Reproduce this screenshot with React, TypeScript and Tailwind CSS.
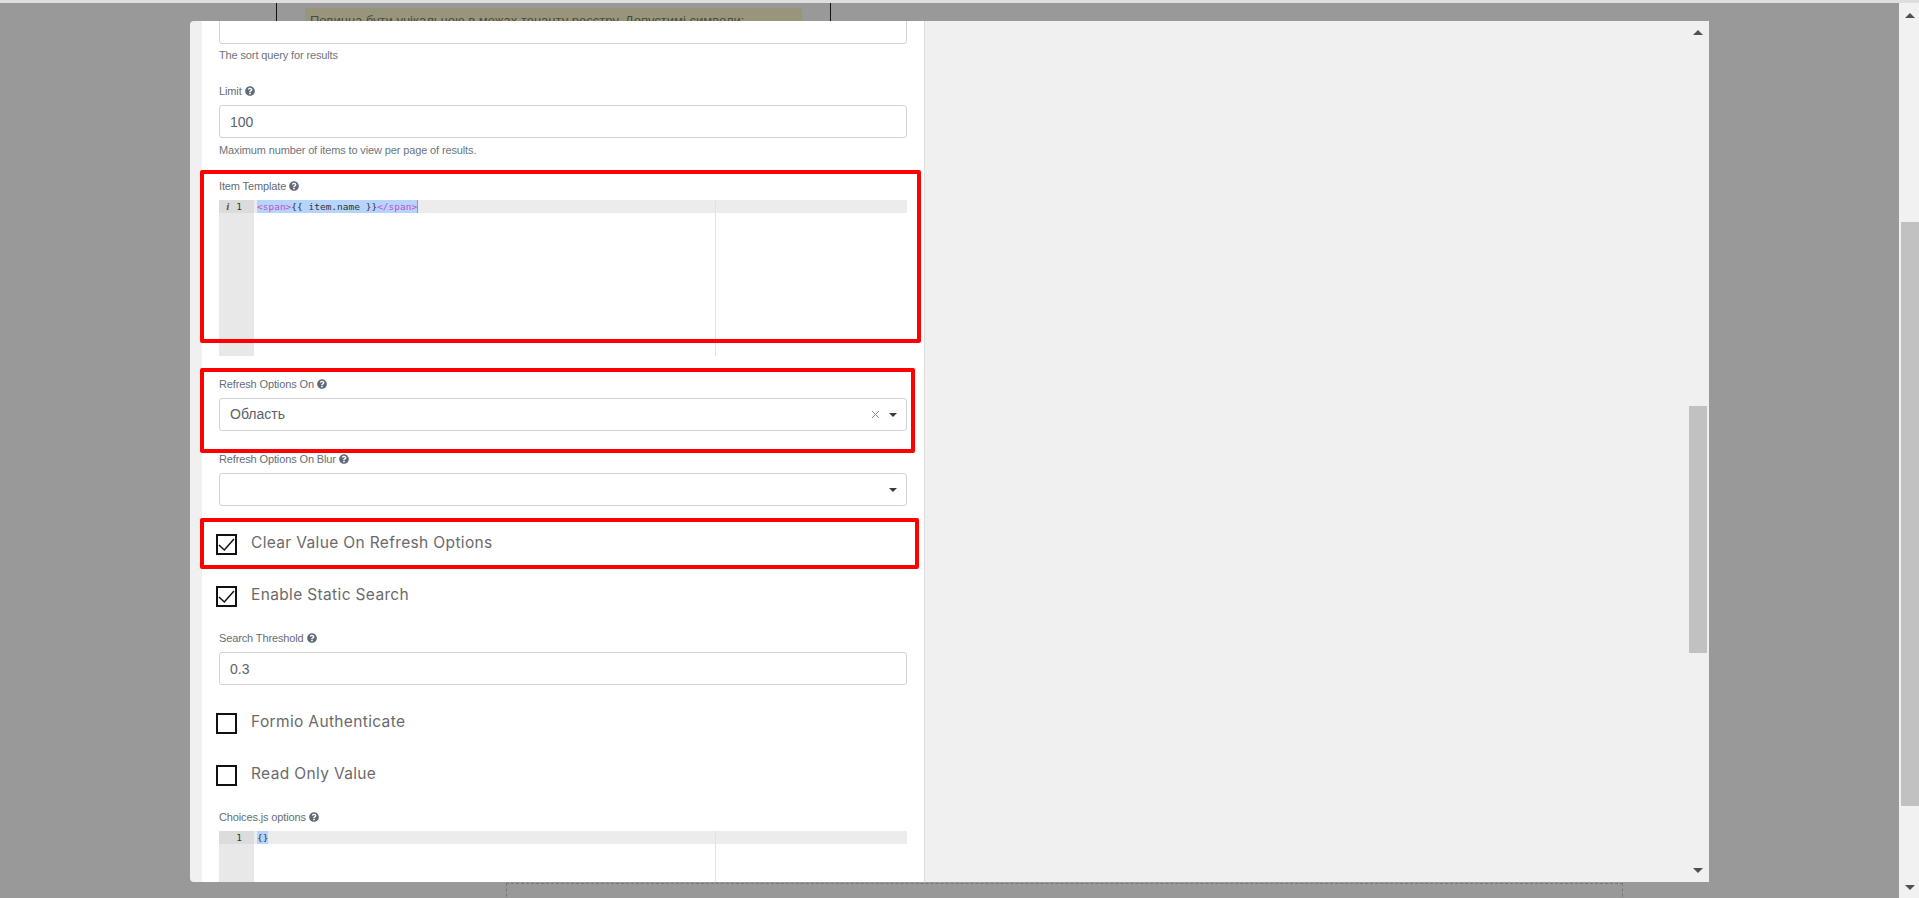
import type { ReactNode } from 'react';
import { FaQuestionCircle } from 'react-icons/fa';

function Label({ text, className = '' }: { text: string; className?: string }) {
  return (
    <div className={`flex h-[14px] items-center gap-[3px] text-[11px] leading-[14px] tracking-[-0.13px] text-[#666d75] ${className}`}>
      <span>{text}</span>
      <FaQuestionCircle size={10} className="text-[#5f6b78]" />
    </div>
  );
}

function HelpText({ text, className = '' }: { text: string; className?: string }) {
  return <p className={`h-[14px] text-[11px] leading-[14px] tracking-[-0.13px] text-[#6c757d] ${className}`}>{text}</p>;
}

function Caret() {
  return <span className="h-0 w-0 border-x-[4px] border-t-[4px] border-x-transparent border-t-[#3a3a3a]" />;
}

function Field({ value, className = '' }: { value?: string; className?: string }) {
  return (
    <div className={`flex h-[33px] items-center rounded-[3px] border border-[#ced4da] bg-white px-[10px] pt-px text-[14px] text-[#5c6268] ${className}`}>
      {value}
    </div>
  );
}

function Select({ value, clear, className = '' }: { value?: string; clear?: boolean; className?: string }) {
  return (
    <div className={`flex h-[33px] items-center rounded-[3px] border border-[#ced4da] bg-white pl-[10px] pr-[9px] text-[14px] text-[#5c6268] ${className}`}>
      <span className="flex-1">{value}</span>
      {clear && (
        <svg width="7" height="7" viewBox="0 0 7 7" stroke="#8a8a8a" strokeWidth="1" className="mr-[10px]">
          <path d="M0 0 L7 7 M7 0 L0 7" />
        </svg>
      )}
      <Caret />
    </div>
  );
}

function Check({ label, checked, className = '' }: { label: string; checked?: boolean; className?: string }) {
  return (
    <div className={`-ml-[3px] flex h-[21px] items-center gap-[14px] ${className}`}>
      <span className="flex h-[21px] w-[21px] shrink-0 items-center justify-center border-2 border-[#111] bg-white">
        {checked && (
          <svg width="17" height="17" viewBox="0 0 17 17" fill="none" stroke="#111" strokeWidth="1.5">
            <path d="M1 9 L6.3 14 L16 3" />
          </svg>
        )}
      </span>
      <span className="-mt-[3px] font-['Inter',sans-serif] text-[15.5px] tracking-[0.35px] text-[#6a6a6a]">{label}</span>
    </div>
  );
}

function CodeEditor({ height, marker, children, className = '' }: { height: string; marker?: boolean; children: ReactNode; className?: string }) {
  return (
    <div className={`flex overflow-hidden bg-white font-['DejaVu_Sans_Mono',monospace] text-[9.5px] leading-[13px] ${height} ${className}`}>
      <div className="w-[35px] shrink-0 bg-[#e8e8e8] text-[#333]">
        <div className="flex h-[13px] items-center justify-end bg-[#dcdcdc] pr-[12px]">
          {marker && <span className="mr-[7px] font-['Liberation_Serif',serif] text-[11px] font-bold italic text-[#555]">i</span>}
          1
        </div>
      </div>
      <div className="w-[462px] shrink-0 border-r border-[#e2e2e2]">
        <div className="flex h-[13px] bg-[#ececec] pl-[3px]">{children}</div>
      </div>
      <div className="flex-1">
        <div className="h-[13px] bg-[#ececec]" />
      </div>
    </div>
  );
}

function RedBox({ className }: { className: string }) {
  return <div className={`absolute rounded-[2px] border-4 border-[#ff0000] ${className}`} />;
}

export default function App() {
  return (
    <div className="relative flex h-[898px] w-full flex-col overflow-hidden bg-white font-['Liberation_Sans',Arial,sans-serif]">
      <div className="h-[3px] shrink-0 bg-[#dedede]" />

      <div className="flex min-h-0 flex-1">
        {/* page behind the modal */}
        <div className="min-w-0 flex-1 bg-[#999999]">
          <div className="ml-[276px] flex h-[18px] w-[555px] border-x border-[#111]">
            <div className="ml-[28px] mt-[5px] h-[30px] w-[497px] bg-[#99957a] pl-[5px] pt-[5px] text-[13px] leading-[16px] text-[#4a4a42]">
              Повинна бути унікальною в межах тенанту реєстру. Допустимі символи:
            </div>
          </div>
        </div>

        {/* page scrollbar */}
        <div className="flex w-5 shrink-0 flex-col bg-[#f1f1f1]">
          <div className="flex h-[219px] justify-center pl-[2px] pt-[10px]">
            <span className="h-0 w-0 border-x-[5px] border-b-[5px] border-x-transparent border-b-[#505050]" />
          </div>
          <div className="ml-[2px] h-[584px] bg-[#c1c1c1]" />
          <div className="flex flex-1 justify-center pl-[2px] pt-[79px]">
            <span className="h-0 w-0 border-x-[5px] border-t-[5px] border-x-transparent border-t-[#505050]" />
          </div>
        </div>
      </div>

      {/* dashed edge of the section below */}
      <div className="absolute left-[506px] top-[883px] h-[30px] w-[1117px] border border-dashed border-[#777]" />

      {/* modal */}
      <div className="absolute left-[190px] top-[21px] flex h-[861px] w-[1519px] overflow-hidden rounded-l-[4px] bg-[#f0f0f0]">
        <div className="ml-[12px] h-full w-[723px] shrink-0 border-r border-[#dddddd] bg-white px-[17px]">
          <Field className="-mt-[10px]" />
          <HelpText text="The sort query for results" className="mt-[4px]" />

          <Label text="Limit" className="mt-[22px]" />
          <Field value="100" className="mt-[7px]" />
          <HelpText text="Maximum number of items to view per page of results." className="mt-[5px]" />

          <Label text="Item Template" className="mt-[22px]" />
          <CodeEditor height="h-[156px]" marker className="mt-[7px]">
            <span className="bg-[#b5d5ff] whitespace-pre">
              <span className="text-[#c84fc0]">{'<span>'}</span>
              <span className="text-[#333]">{'{{ item.name }}'}</span>
              <span className="text-[#c84fc0]">{'</span>'}</span>
            </span>
            <span className="w-px bg-[#999]" />
          </CodeEditor>

          <Label text="Refresh Options On" className="mt-[21px]" />
          <Select value="Область" clear className="mt-[7px]" />

          <Label text="Refresh Options On Blur" className="mt-[21px]" />
          <Select className="mt-[7px]" />

          <Check label="Clear Value On Refresh Options" checked className="mt-[28px]" />
          <Check label="Enable Static Search" checked className="mt-[31px]" />

          <Label text="Search Threshold" className="mt-[24px]" />
          <Field value="0.3" className="mt-[7px]" />

          <Check label="Formio Authenticate" className="mt-[28px]" />
          <Check label="Read Only Value" className="mt-[31px]" />

          <Label text="Choices.js options" className="mt-[24px]" />
          <CodeEditor height="h-[156px]" className="mt-[7px]">
            <span className="bg-[#b5d5ff] text-[#333]">{'{}'}</span>
          </CodeEditor>
        </div>

        {/* modal scrollbar */}
        <div className="ml-auto flex w-5 shrink-0 flex-col">
          <div className="flex h-[385px] justify-center pr-[2px] pt-[9px]">
            <span className="h-0 w-0 border-x-[5px] border-b-[5px] border-x-transparent border-b-[#505050]" />
          </div>
          <div className="mr-[2px] h-[247px] bg-[#c1c1c1]" />
          <div className="flex flex-1 justify-center pr-[2px] pt-[215px]">
            <span className="h-0 w-0 border-x-[5px] border-t-[5px] border-x-transparent border-t-[#505050]" />
          </div>
        </div>

        {/* review annotations drawn over the form */}
        <RedBox className="left-[10px] top-[149px] h-[173px] w-[721px]" />
        <RedBox className="left-[10px] top-[347px] h-[85px] w-[715px]" />
        <RedBox className="left-[10px] top-[497px] h-[51px] w-[719px]" />
      </div>
    </div>
  );
}
